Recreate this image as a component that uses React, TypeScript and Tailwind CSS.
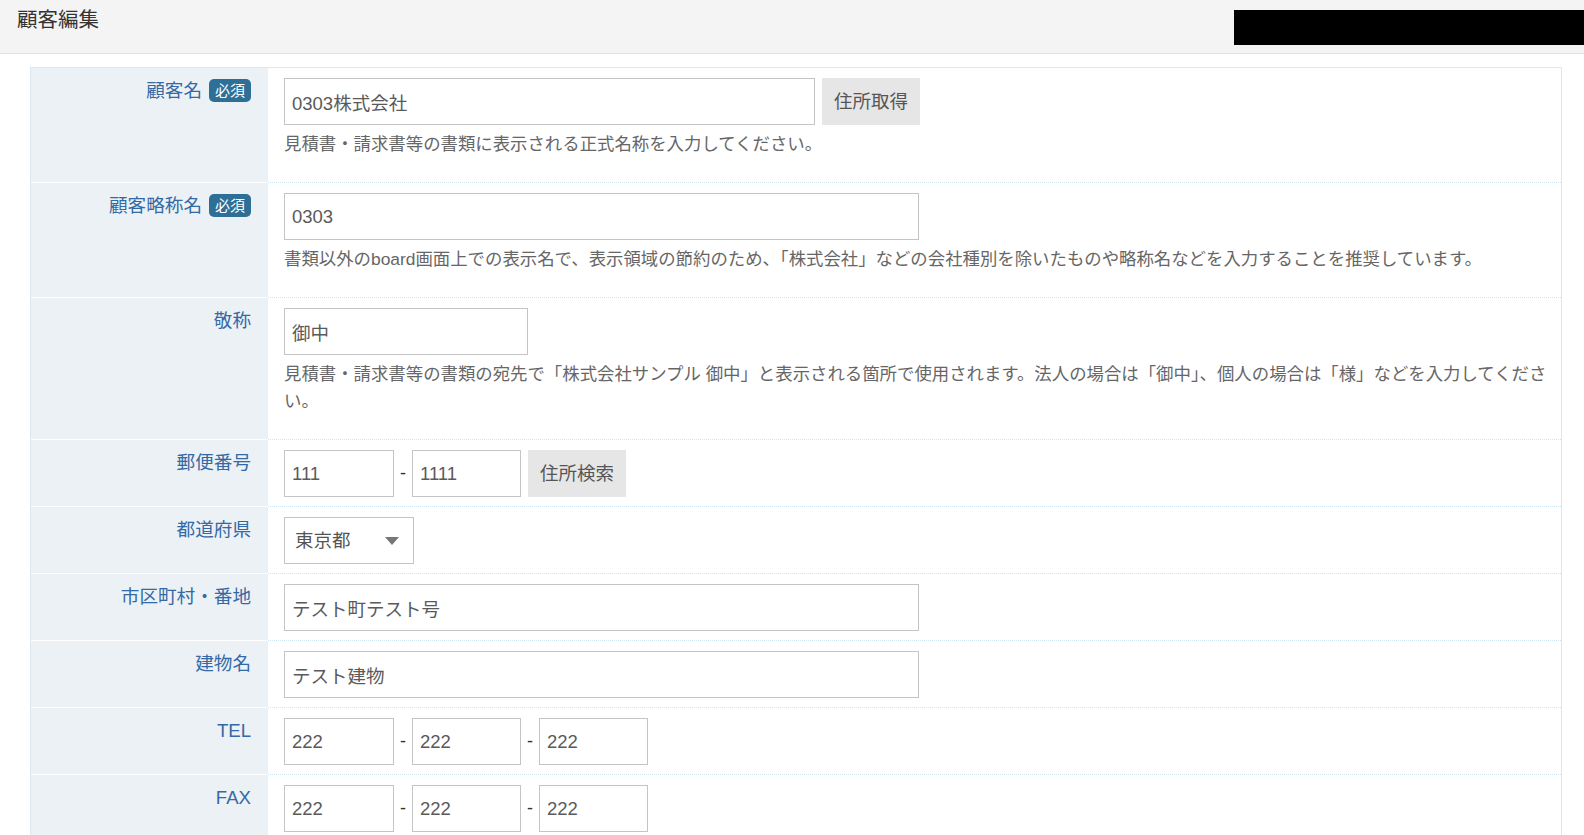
import React from 'react';

const font = { fontFamily: '"Liberation Sans", "Noto Sans CJK JP", sans-serif' };

const Badge: React.FC = () => (
    <span className="ml-[7px] mt-[1px] inline-block rounded-[5px] bg-[#2e6f97] px-[6px] align-top text-[15px] leading-[23px] text-white">必須</span>
);

const Row: React.FC<{ label: string; required?: boolean; children: React.ReactNode }> = ({ label, required, children }) => (
    <div className="flex">
        <div className="w-[237px] flex-shrink-0 border-b border-white bg-[#ecf1f5] pr-[17px] pt-[10px] text-right text-[18.6px] leading-[26px] text-[#3469a6]">
            {label}
            {required && <Badge />}
        </div>
        <div className="flex-grow border-b border-dotted border-[#cfe4f3] pb-[9px] pl-[16px] pr-[10px] pt-[10px]">
            {children}
        </div>
    </div>
);

const Input: React.FC<{ value: string; w: string }> = ({ value, w }) => (
    <input
        readOnly
        value={value}
        className={`${w} h-[47px] border border-[#c4c4c4] bg-white px-[7px] text-[18.5px] text-[#5a5a5a] outline-none`}
        style={font}
    />
);

const Help: React.FC<{ children: React.ReactNode }> = ({ children }) => (
    <p className="mb-[15px] mt-[6px] text-[17.4px] leading-[27px] text-[#666]">{children}</p>
);

const Dash = () => <span className="mx-[6px] text-[18px] text-[#333]">-</span>;

const Button: React.FC<{ text: string }> = ({ text }) => (
    <button className="ml-[7px] h-[47px] bg-[#e6e6e6] px-[12px] text-[18.5px] text-[#555]" style={font}>{text}</button>
);

const App: React.FC = () => {
    return (
        <div className="min-h-screen bg-white" style={font}>
            <div className="flex h-[54px] justify-between border-b border-[#e2e2e2] bg-[#f4f4f4]">
                <h1 className="pl-[17px] pt-[6px] text-[20.5px] leading-[28px] text-[#333]">顧客編集</h1>
                <div className="mt-[10px] h-[35px] w-[350px] bg-black" />
            </div>

            <div className="ml-[30px] mt-[13px] w-[1532px] border border-[#dde7f1]">
                <Row label="顧客名" required>
                    <div className="flex">
                        <Input value="0303株式会社" w="w-[531px]" />
                        <Button text="住所取得" />
                    </div>
                    <Help>見積書・請求書等の書類に表示される正式名称を入力してください。</Help>
                </Row>
                <Row label="顧客略称名" required>
                    <Input value="0303" w="w-[635px]" />
                    <Help>書類以外のboard画面上での表示名で、表示領域の節約のため、「株式会社」などの会社種別を除いたものや略称名などを入力することを推奨しています。</Help>
                </Row>
                <Row label="敬称">
                    <Input value="御中" w="w-[244px]" />
                    <Help>見積書・請求書等の書類の宛先で「株式会社サンプル 御中」と表示される箇所で使用されます。法人の場合は「御中」、個人の場合は「様」などを入力してください。</Help>
                </Row>
                <Row label="郵便番号">
                    <div className="flex items-center">
                        <Input value="111" w="w-[110px]" />
                        <Dash />
                        <Input value="1111" w="w-[109px]" />
                        <Button text="住所検索" />
                    </div>
                </Row>
                <Row label="都道府県">
                    <div className="relative w-[130px]">
                        <select
                            className="h-[47px] w-full appearance-none border border-[#c4c4c4] bg-white pl-[10px] text-[18.5px] text-[#555] outline-none"
                            style={font}
                            defaultValue="東京都"
                        >
                            <option>東京都</option>
                        </select>
                        <svg className="pointer-events-none absolute right-[15px] top-[20px]" width="14" height="8" viewBox="0 0 14 8">
                            <path d="M0 0 H14 L7 8 Z" fill="#777" />
                        </svg>
                    </div>
                </Row>
                <Row label="市区町村・番地">
                    <Input value="テスト町テスト号" w="w-[635px]" />
                </Row>
                <Row label="建物名">
                    <Input value="テスト建物" w="w-[635px]" />
                </Row>
                <Row label="TEL">
                    <div className="flex items-center">
                        <Input value="222" w="w-[110px]" />
                        <Dash />
                        <Input value="222" w="w-[109px]" />
                        <Dash />
                        <Input value="222" w="w-[109px]" />
                    </div>
                </Row>
                <Row label="FAX">
                    <div className="flex items-center">
                        <Input value="222" w="w-[110px]" />
                        <Dash />
                        <Input value="222" w="w-[109px]" />
                        <Dash />
                        <Input value="222" w="w-[109px]" />
                    </div>
                </Row>
            </div>
        </div>
    );
};

export default App;
